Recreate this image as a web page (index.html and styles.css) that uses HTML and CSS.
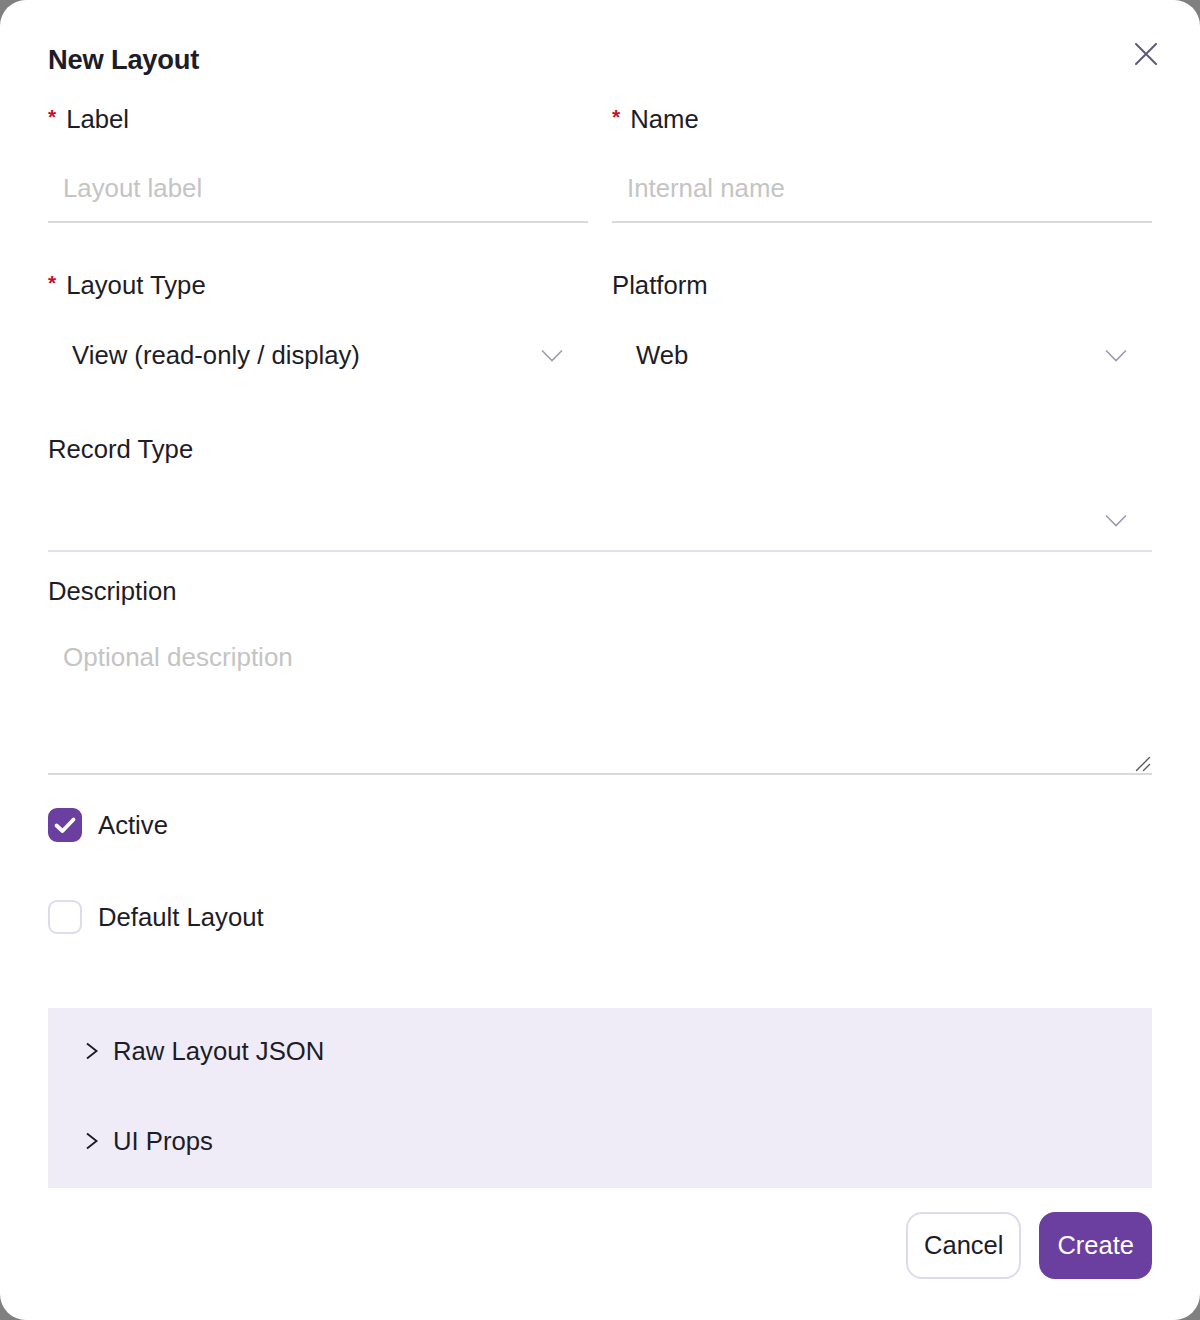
FILE: index.html
```html
<!DOCTYPE html>
<html lang="en">
<head>
<meta charset="utf-8">
<title>New Layout</title>
<link rel="stylesheet" href="styles.css">
</head>
<body>
<div class="modal" role="dialog" aria-labelledby="dlg-title">
  <header class="modal-header">
    <h2 class="title" id="dlg-title">New Layout</h2>
    <button class="close" type="button" aria-label="Close">
      <svg width="22" height="22" viewBox="0 0 22 22"><path d="M1 1 L21 21 M21 1 L1 21" stroke="#5f5a73" stroke-width="2" stroke-linecap="round" fill="none"/></svg>
    </button>
  </header>

  <div class="row row-first">
    <div class="field">
      <label class="label"><span class="req">*</span>Label</label>
      <input class="input" type="text" placeholder="Layout label">
    </div>
    <div class="field">
      <label class="label"><span class="req">*</span>Name</label>
      <input class="input" type="text" placeholder="Internal name">
    </div>
  </div>

  <div class="row row-second">
    <div class="field">
      <label class="label"><span class="req">*</span>Layout Type</label>
      <div class="select">
        <span class="select-value">View (read-only / display)</span>
        <svg class="chev" width="22" height="13" viewBox="0 0 22 13"><polyline points="1,1.5 11,11.5 21,1.5" fill="none" stroke="#9d9aad" stroke-width="1.6"/></svg>
      </div>
    </div>
    <div class="field">
      <label class="label">Platform</label>
      <div class="select">
        <span class="select-value">Web</span>
        <svg class="chev" width="22" height="13" viewBox="0 0 22 13"><polyline points="1,1.5 11,11.5 21,1.5" fill="none" stroke="#9d9aad" stroke-width="1.6"/></svg>
      </div>
    </div>
  </div>

  <div class="field field-record">
    <label class="label">Record Type</label>
    <div class="select select-lined">
      <span class="select-value"></span>
      <svg class="chev" width="22" height="13" viewBox="0 0 22 13"><polyline points="1,1.5 11,11.5 21,1.5" fill="none" stroke="#9d9aad" stroke-width="1.6"/></svg>
    </div>
  </div>

  <div class="field field-desc">
    <label class="label">Description</label>
    <div class="textarea-wrap">
      <textarea class="textarea" placeholder="Optional description"></textarea>
      <svg class="grip" width="16" height="16" viewBox="0 0 16 16"><path d="M1.5 14.5 L14.5 1.5 M8.5 14.5 L14.5 8.5" stroke="#5a5a5a" stroke-width="1.4" stroke-linecap="round" fill="none"/></svg>
    </div>
  </div>

  <div class="check-row check-active">
    <span class="box box-on">
      <svg width="24" height="20" viewBox="0 0 24 20"><polyline points="3.5,10.5 9.5,16 20.5,4.5" fill="none" stroke="#fff" stroke-width="3.8" stroke-linecap="round" stroke-linejoin="round"/></svg>
    </span>
    <span class="check-text">Active</span>
  </div>

  <div class="check-row check-default">
    <span class="box"></span>
    <span class="check-text">Default Layout</span>
  </div>

  <div class="panel">
    <div class="panel-item">
      <svg class="caret" width="14" height="18" viewBox="0 0 14 18"><polyline points="2,1.5 11.5,9 2,16.5" fill="none" stroke="#1d1c27" stroke-width="1.9"/></svg>
      <span>Raw Layout JSON</span>
    </div>
    <div class="panel-item">
      <svg class="caret" width="14" height="18" viewBox="0 0 14 18"><polyline points="2,1.5 11.5,9 2,16.5" fill="none" stroke="#1d1c27" stroke-width="1.9"/></svg>
      <span>UI Props</span>
    </div>
  </div>

  <footer class="actions">
    <button class="btn btn-cancel" type="button">Cancel</button>
    <button class="btn btn-create" type="button">Create</button>
  </footer>
</div>
</body>
</html>
```

FILE: styles.css
```css
* { box-sizing: border-box; }

html, body {
  margin: 0;
  padding: 0;
}

body {
  background: #808080;
  font-family: "Liberation Sans", Arial, Helvetica, sans-serif;
  color: #1d1c27;
}

.modal {
  position: relative;
  width: 1200px;
  height: 1320px;
  background: #ffffff;
  border-radius: 26px;
  padding: 44px 48px 0;
  display: flex;
  flex-direction: column;
}

.modal-header {
  display: flex;
  align-items: center;
  justify-content: space-between;
}

.title {
  margin: 0;
  font-size: 27.3px;
  line-height: 32px;
  font-weight: 700;
  letter-spacing: -0.2px;
  color: #1d1c27;
}

.close {
  position: absolute;
  top: 43px;
  right: 43px;
  width: 22px;
  height: 22px;
  padding: 0;
  border: 0;
  background: none;
  display: flex;
}

.row {
  display: grid;
  grid-template-columns: 1fr 1fr;
  column-gap: 24px;
}

.row-first { margin-top: 27px; }
.row-second { margin-top: 46px; }

.field {
  display: flex;
  flex-direction: column;
}

.label {
  font-size: 25.7px;
  line-height: 32px;
  margin-bottom: 20px;
  color: #1d1c27;
  display: flex;
  align-items: center;
}

.req {
  color: #c8102e;
  font-size: 21px;
  font-weight: 700;
  margin-right: 10px;
  position: relative;
  top: -2px;
}

.input {
  height: 68px;
  border: 0;
  border-bottom: 2px solid #d9d9d9;
  padding: 0 15px;
  font-family: inherit;
  font-size: 25.8px;
  color: #1d1c27;
  outline: none;
  background: transparent;
  width: 100%;
}

.input::placeholder,
.textarea::placeholder {
  color: #c4c4c4;
  opacity: 1;
}

.select {
  height: 68px;
  display: flex;
  align-items: center;
  justify-content: space-between;
  padding: 0 25px 0 24px;
  font-size: 25.7px;
}

.select-lined {
  height: 67px;
  padding-top: 5px;
  border-bottom: 2px solid #e2e0ee;
}

.chev { flex: none; }

.field-record { margin-top: 44px; }
.field-desc { margin-top: 23px; }

.textarea-wrap {
  position: relative;
  height: 148px;
}

.textarea {
  display: block;
  height: 148px;
  border: 0;
  border-bottom: 2px solid #d9d9d9;
  padding: 15px 15px;
  font-family: inherit;
  font-size: 26px;
  line-height: 30px;
  color: #1d1c27;
  outline: none;
  resize: none;
  width: 100%;
}

.grip {
  position: absolute;
  right: 1px;
  bottom: 3px;
  pointer-events: none;
}

.check-row {
  display: flex;
  align-items: center;
  gap: 16px;
  height: 34px;
}

.check-active { margin-top: 33px; }
.check-default { margin-top: 58px; }

.box {
  width: 34px;
  height: 34px;
  border-radius: 9px;
  border: 2px solid #dedcec;
  background: #fff;
  display: flex;
  align-items: center;
  justify-content: center;
  flex: none;
}

.box-on {
  background: #6b3fa0;
  border-color: #6b3fa0;
}

.check-text {
  font-size: 25.7px;
}

.panel {
  margin-top: 74px;
  background: #efecf7;
  display: flex;
  flex-direction: column;
}

.panel-item {
  height: 90px;
  display: flex;
  align-items: center;
  padding-left: 37px;
  gap: 14px;
  font-size: 25.7px;
  padding-bottom: 4px;
}

.caret { flex: none; }

.actions {
  margin-top: 24px;
  display: flex;
  justify-content: flex-end;
  gap: 18px;
}

.btn {
  height: 67px;
  padding: 0 16px;
  border-radius: 16px;
  font-family: inherit;
  font-size: 25.5px;
  display: flex;
  align-items: center;
  justify-content: center;
  cursor: pointer;
}

.btn-cancel {
  background: #fff;
  border: 2px solid #dddbeb;
  color: #1d1c27;
}

.btn-create {
  background: #6b3fa0;
  border: 2px solid #6b3fa0;
  color: #ffffff;
}
```
